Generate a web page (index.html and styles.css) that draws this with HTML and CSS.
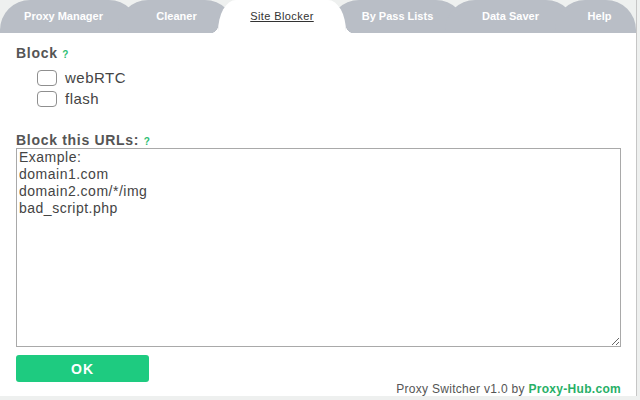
FILE: index.html
```html
<!DOCTYPE html>
<html lang="en">
<head>
  <meta charset="UTF-8">
  <title>Proxy Switcher - Site Blocker</title>
  <link rel="stylesheet" href="styles.css">
</head>
<body>
  <div class="window">
    <nav class="tabs">
      <a class="tab tab-proxy">Proxy Manager</a>
      <a class="tab tab-cleaner">Cleaner</a>
      <a class="tab tab-blocker active">Site Blocker</a>
      <a class="tab tab-bypass">By Pass Lists</a>
      <a class="tab tab-saver">Data Saver</a>
      <a class="tab tab-help">Help</a>
    </nav>

    <div class="content">
      <h3 class="label">Block <span class="hint">?</span></h3>
      <ul class="options">
        <li><label><span class="box"></span>webRTC</label></li>
        <li><label><span class="box"></span>flash</label></li>
      </ul>

      <h3 class="label label-urls">Block this URLs: <span class="hint">?</span></h3>
      <textarea class="urls">Example:
domain1.com
domain2.com/*/img
bad_script.php</textarea>

      <button class="btn-ok">OK</button>

      <p class="footer">Proxy Switcher v1.0 by <a>Proxy-Hub.com</a></p>
    </div>
  </div>
</body>
</html>
```

FILE: styles.css
```css
html, body {
  margin: 0;
  height: 400px;
  overflow: hidden;
}
body {
  background: #eef0ef;
  font-family: "Liberation Sans", Arial, sans-serif;
  color: #444;
}
.window {
  width: 636px;
  height: 396px;
  background: #fff;
  border-right: 1px solid #c6c6c6;
  display: flex;
  flex-direction: column;
}

/* tabs */
.tabs {
  display: flex;
  height: 33px;
  background: #eef0ef;
  flex-shrink: 0;
}
.tab {
  position: relative;
  height: 33px;
  line-height: 33px;
  margin-left: -21px;
  text-align: center;
  font-size: 11px;
  font-weight: bold;
  color: #fff;
  background: #b9bec6;
  border-radius: 30px 30px 0 0 / 30px 30px 0 0;
  box-sizing: border-box;
}
.tab-proxy { width: 139px; margin-left: 0; padding-right: 12px; }
.tab-cleaner { width: 117px; }
.tab-blocker { width: 136px; }
.tab-bypass { width: 137px; }
.tab-saver { width: 131px; }
.tab-help { width: 81px; padding-left: 8px; }

.tab.active {
  z-index: 2;
  background: #fff;
  color: #333;
  font-weight: normal;
  letter-spacing: 0.4px;
  text-decoration: underline;
  border-radius: 18px 18px 0 0 / 32px 32px 0 0;
  margin-left: -17px;
  margin-right: 4px;
  width: 128px;
}
.tab.active::before,
.tab.active::after {
  content: "";
  position: absolute;
  bottom: 0;
  width: 8px;
  height: 8px;
}
.tab.active::before {
  left: -8px;
  background: radial-gradient(circle at 0 0, transparent 8px, #fff 8.5px);
}
.tab.active::after {
  right: -8px;
  background: radial-gradient(circle at 100% 0, transparent 8px, #fff 8.5px);
}

/* content */
.content {
  flex: 1;
  display: flex;
  flex-direction: column;
  padding: 0 15px 0 16px;
}
.label {
  margin: 12px 0 0;
  height: 16px;
  font-size: 14px;
  line-height: 16px;
  letter-spacing: 0.7px;
  font-weight: bold;
  color: #555;
}
.label-urls { margin-top: 23px; }
.hint {
  font-size: 10px;
  line-height: 10px;
  letter-spacing: 0;
  color: #2dbe73;
}
.options {
  list-style: none;
  margin: 6px 0 0;
  padding: 0 0 0 21px;
}
.options li {
  height: 21px;
  display: flex;
  align-items: center;
}
.options label {
  display: flex;
  align-items: center;
  gap: 8px;
  font-size: 15px;
  line-height: 17px;
  letter-spacing: 0.5px;
  color: #444;
}
.box {
  width: 18px;
  height: 14px;
  border: 1px solid #8f8f8f;
  border-radius: 4px;
  background: #fff;
}
.urls {
  display: block;
  width: 605px;
  height: 199px;
  box-sizing: border-box;
  margin: 0;
  padding: 0 2px;
  border: 1px solid #a9a9a9;
  font-family: "Liberation Sans", Arial, sans-serif;
  font-size: 14px;
  line-height: 17px;
  letter-spacing: 0.5px;
  color: #444;
}
.btn-ok {
  margin-top: 8px;
  width: 133px;
  height: 27px;
  border: none;
  border-radius: 3px;
  background: #1ecb80;
  color: #fff;
  font-family: "Liberation Sans", Arial, sans-serif;
  font-size: 14px;
  letter-spacing: 1px;
  font-weight: bold;
}
.footer {
  margin: auto 0 0;
  text-align: right;
  font-size: 12px;
  line-height: 14px;
  letter-spacing: 0.3px;
  padding-bottom: 1px;
  color: #555;
}
.footer a {
  color: #27b067;
  font-weight: bold;
}
```
